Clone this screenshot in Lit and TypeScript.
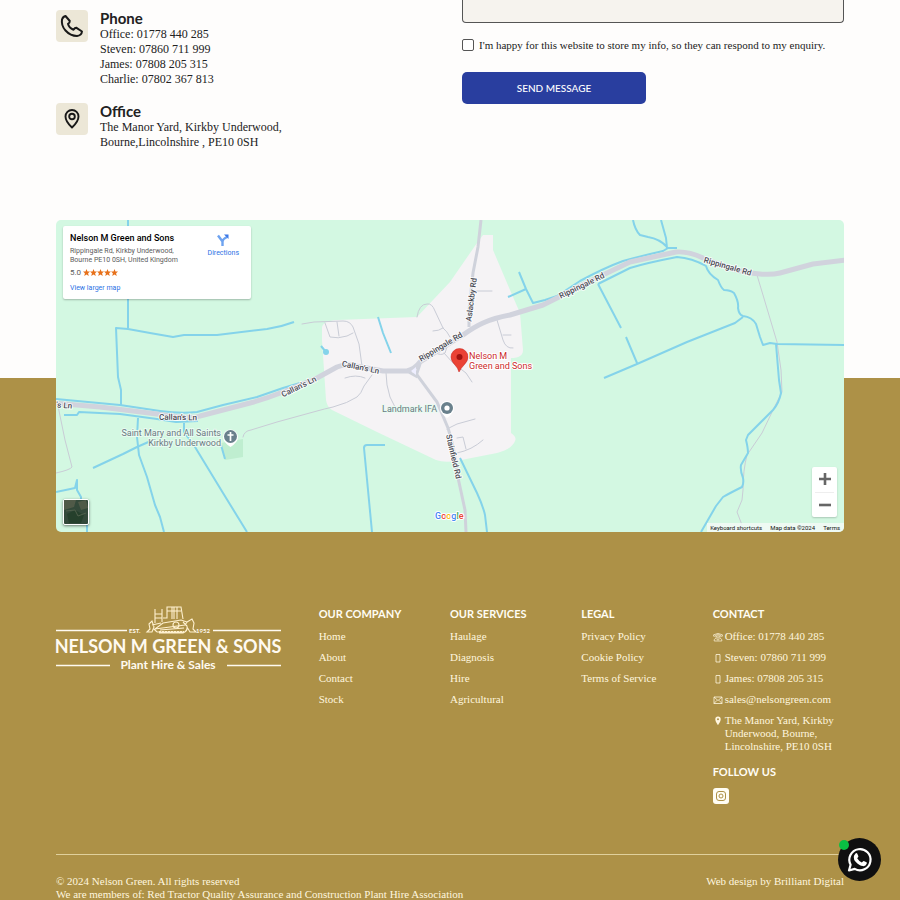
import { LitElement, html, css, svg } from "lit";
import { customElement } from "lit/decorators.js";

const water = [
  "M72 0V108",
  "M65 185V170L62 157L60 108L72 109L94 113L117 117L128 115L161 115L211 109Q225 107 238 102",
  "M0 179L64 185L104 191Q125 194 141 192Q152 189 167 185L201 177L227 168L244 163",
  "M8 195H21L23 192L64 194L101 199L120 202L142 201",
  "M82 198L81 217L83 235L91 257L99 285L104 297L108 312",
  "M37 248L67 234L81 227L97 220",
  "M128 203V212L139 227L167 273L191 312 M165 225L169 239",
  "M0 272L19 268L21 260V270L25 277V285 M31 303V312",
  "M322 97L327 113L335 133 M265 126L270 132",
  "M316 312L312 270L308 228Q308 225 311 225H329",
  "M404 238L421 273Q427 286 429 295L431 312",
  "M463 52L470 69L477 83L489 80L501 76L524 61Q548 48 567 41Q585 36 607 31L612 28H621 M470 69L452 77",
  "M577 0Q579 10 584 15L592 17Q604 19 611 27 M605 0L610 18L611 28",
  "M542 64L574 48Q590 43 621 37Q636 38 650 46Q652 54 662 60Q665 68 668 70Q674 70 678 73Q683 82 682 88Q683 95 687 96Q696 97 700 104L704 117L707 125L714 123L721 124L788 125",
  "M542 64L565 108 M570 117L581 143 M548 158L581 144L631 122L679 103L687 97",
  "M720 124L723 160L725 173Q723 183 717 190L692 215L690 220Q692 228 692 233L685 245Q684 250 687 258Q688 263 686 267Q674 273 667 277L660 286L645 312",
];

const bigRoads = [
  "M-2 183L44 187L77 191L124 197Q138 198 144 196L194 183Q212 178 227 172L261 158L281 147Q290 143 300 146L327 151H351Q359 149 364 142L407 115Q418 107 427 103Q438 98 454 95L487 85L507 75L524 66L551 53L574 42L597 37L620 32Q632 31 647 38L674 48Q690 53 704 54Q716 55 724 53L757 44L790 40",
];

const midRoads = [
  "M425 0L422 27L417 53L413 90V107",
  "M357 149L361 155L381 182L392 208Q399 230 401 253L409 290L410 312",
  "M351 151L360 156L364 144",
];

const smallRoads = [
  "M2 186L9 220L16 247Q14 250 0 253",
  "M246 104L258 102L287 101Q294 101 297 107L303 124L306 146 M269 103L274 117Q282 119 291 116L297 113 M281 102L283 116",
  "M187 217Q188 211 195 210L221 202L261 191Q268 189 277 187Q292 183 301 177Q305 174 308 166L316 155 M289 158Q300 154 309 158",
  "M361 97Q363 84 371 84Q376 83 379 91L387 108Q391 111 394 117 M377 111Q383 111 387 108",
  "M380 133Q385 136 389 133L391 127 M388 133L397 143L410 153L416 162",
  "M419 71H436 M441 100L447 120Q450 129 457 128 M447 115H455",
  "M330 153Q330 165 334 177L339 187 M391 209L401 204L419 199 M401 218L407 217L410 229 M401 233Q416 230 427 220",
  "M701 55L721 122L725 150L726 172L717 190L706 213L691 235Q687 250 687 270L686 280L681 292L686 305",
];

@customElement("site-map")
export class SiteMap extends LitElement {
  static styles = css`
    :host { display: block; position: relative; height: 312px; overflow: hidden; border-radius: 5px; background: #d3f8e2; font-family: Roboto, sans-serif; }
    .canvas { display: block; width: 100%; height: 100%; font-family: Roboto, sans-serif; }
    .card { position: absolute; left: 7px; top: 6px; width: 188px; height: 73px; box-sizing: border-box; padding: 7px; background: #fff; border-radius: 2px; box-shadow: 0 1px 2px rgba(0,0,0,.25); display: flex; justify-content: space-between; color: #5b5b5b; font-size: 7px; line-height: 9px; }
    .name { margin: 0 0 4px; font-size: 9px; line-height: 10px; font-weight: 500; color: #000; white-space: nowrap; }
    .addr { margin: 0; white-space: nowrap; }
    .rate { margin: 3px 0 7px; font-size: 8px; display: flex; align-items: center; gap: 2px; }
    .stars { width: 35px; height: 7px; }
    a { color: #2a72e5; text-decoration: none; }
    .dir { display: flex; flex-direction: column; align-items: center; gap: 3px; padding: 1px 5px 0 0; height: 30px; }
    .dir svg { flex: none; }
    .zoom { position: absolute; right: 7px; bottom: 15px; width: 25px; height: 50px; border-radius: 2px; background: #fff; box-shadow: 0 1px 2px rgba(0,0,0,.2); display: flex; flex-direction: column; align-items: center; }
    .zoom button { flex: 1; width: 25px; padding: 0; border: 0; background: none; display: grid; place-items: center; }
    .zoom button + button { width: 19px; border-top: 1px solid #eee; }
    .sat { position: absolute; left: 7px; bottom: 7px; width: 26px; height: 26px; padding: 0; border: 1px solid #fff; border-radius: 2px; box-shadow: 0 1px 3px rgba(0,0,0,.5); overflow: hidden; }
    .sat svg { display: block; }
    .legal { position: absolute; right: 0; bottom: 0; height: 9px; display: flex; gap: 8px; padding: 0 4px 0 3px; background: rgba(245,250,247,.8); font-size: 6px; line-height: 9px; color: #111; white-space: nowrap; }
    .legal a { color: #111; }
  `;

  render() {
    return html`
      <svg class="canvas" viewBox="0 0 788 312" preserveAspectRatio="xMidYMid slice" role="img" aria-label="Map of Kirkby Underwood">
        <path fill="#f5f3f5" d="M427 15H437V30L454 70L464 93L467 130Q467 138 455 138V213Q461 217 459 221Q456 229 441 233L400 241Q388 243 380 240L321 212L276 190Q271 187 270 180L266 120V108Q266 101 281 100L361 97L394 62L421 23Z" />
        <path fill="#bfeed0" d="M165 223L187 219V237L169 240Z" />
        <g fill="none" stroke="#c9ccd6" stroke-width="1" stroke-linecap="round">${smallRoads.map((d) => svg`<path d=${d} />`)}</g>
        <g fill="none" stroke="#84d3ea" stroke-width="2" stroke-linejoin="round">${water.map((d) => svg`<path d=${d} />`)}</g>
        <circle cx="270" cy="132" r="3" fill="#84d3ea" />
        <g fill="none" stroke="#cfd2db" stroke-width="3">${midRoads.map((d) => svg`<path d=${d} />`)}</g>
        <g fill="none" stroke="#d1d3dd" stroke-width="5" stroke-linejoin="round">${bigRoads.map((d) => svg`<path d=${d} />`)}</g>
        <path d="M355 151L360 147V155Z" fill="#eef" />
        <g font-size="8" font-weight="500" fill="#4a4b55" stroke="#fff" stroke-opacity="0.800" stroke-width="2" stroke-linejoin="round" paint-order="stroke" text-anchor="middle">
          <text transform="translate(8 188) rotate(5)">'s Ln</text>
          <text transform="translate(122 200) rotate(1)">Callan's Ln</text>
          <text transform="translate(244 169) rotate(-26)">Callan's Ln</text>
          <text transform="translate(304 150) rotate(12)">Callan's Ln</text>
          <text transform="translate(386 129) rotate(-31)">Rippingale Rd</text>
          <text transform="translate(418 80) rotate(-83)">Aslackby Rd</text>
          <text transform="translate(527 68) rotate(-26)">Rippingale Rd</text>
          <text transform="translate(671 49) rotate(16)">Rippingale Rd</text>
          <text transform="translate(395 237) rotate(77)">Stainfield Rd</text>
        </g>
        <g font-size="9" fill="#6b7a83" stroke="#e9fbf1" stroke-width="2" paint-order="stroke" text-anchor="end">
          <text x="165" y="216">Saint Mary and All Saints</text>
          <text x="165" y="226">Kirkby Underwood</text>
          <text x="381" y="192">Landmark IFA</text>
        </g>
        <path d="M167 217a7.500 7.500 0 1 1 15 0q0 5-7.500 10q-7.500-5-7.500-10Z" fill="#fff" />
        <circle cx="174.500" cy="216.500" r="6.500" fill="#69808c" />
        <path d="M174.500 212v9M171.500 215h6" stroke="#fff" stroke-width="1.700" />
        <path d="M384 188a7 7 0 1 1 14 0q0 5-7 10q-7-5-7-10Z" fill="#fff" />
        <circle cx="391" cy="188" r="6" fill="#69808c" /><circle cx="391" cy="188" r="2.600" fill="#fff" />
        <path d="M403 152q-1-4-4-7q-4-4-4-8a8 8 0 1 1 17 0q0 4-4 8q-3 3-5 7Z" fill="#ea4335" stroke="#c5221f" stroke-width="0.500" />
        <circle cx="403.500" cy="137" r="3" fill="#a11410" />
        <g font-size="9" fill="#cc2a2a" stroke="#fff" stroke-width="2" paint-order="stroke">
          <text x="413" y="139">Nelson M</text>
          <text x="413" y="149">Green and Sons</text>
        </g>
        <text x="379" y="299" font-size="9" font-weight="500" stroke="#fff" stroke-width="2" paint-order="stroke"><tspan fill="#4285f4">G</tspan><tspan fill="#ea4335">o</tspan><tspan fill="#fbbc05">o</tspan><tspan fill="#4285f4">g</tspan><tspan fill="#34a853">l</tspan><tspan fill="#ea4335">e</tspan></text>
      </svg>
      <div class="card">
        <div>
          <p class="name">Nelson M Green and Sons</p>
          <p class="addr">Rippingale Rd, Kirkby Underwood,<br />Bourne PE10 0SH, United Kingdom</p>
          <p class="rate">5.0
            <svg class="stars" viewBox="0 0 35 7" fill="#e7711b">${[0, 7, 14, 21, 28].map((x) => svg`<path transform="translate(${x} 0)" d="M3.500 0l1 2.400 2.500.2-1.900 1.700.6 2.600-2.200-1.400-2.200 1.400.6-2.600L0 2.600l2.500-.2z" />`)}</svg>
          </p>
          <a href="#map">View larger map</a>
        </div>
        <a class="dir" href="#directions">
          <svg width="12" height="12" viewBox="0 0 12 12"><path d="M5.500 12V7.500L1 1.500M5.500 8Q5.500 5 10 3" fill="none" stroke="#6ea3f0" stroke-width="2.400" /><path d="M7 0.500h4.500V5z" fill="#3b78e7" /></svg>
          Directions
        </a>
      </div>
      <button class="sat" aria-label="Show satellite imagery">
        <svg width="24" height="24" viewBox="0 0 24 24"><path fill="#33493a" d="M0 0h24v24H0z" /><path fill="#505a48" d="M0 0h12l-2 7-10 3zM14 2l8-2 2 8-7 2z" /><path fill="#25402c" d="M3 14l8-4 9 5-3 8H5z" /><path stroke="#4f5f4b" stroke-width="1" d="M2 11l9-1 3 6 8-3" fill="none" /></svg>
      </button>
      <div class="zoom">
        <button aria-label="Zoom in"><svg width="12" height="12"><path d="M6 0v12M0 6h12" stroke="#666" stroke-width="2.600" /></svg></button>
        <button aria-label="Zoom out"><svg width="12" height="12"><path d="M0 6h12" stroke="#666" stroke-width="2.600" /></svg></button>
      </div>
      <div class="legal"><span>Keyboard shortcuts</span><span>Map data ©2024</span><a href="#terms">Terms</a></div>
    `;
  }
}

const columns = [
  { title: "OUR COMPANY", links: ["Home", "About", "Contact", "Stock"] },
  { title: "OUR SERVICES", links: ["Haulage", "Diagnosis", "Hire", "Agricultural"] },
  { title: "LEGAL", links: ["Privacy Policy", "Cookie Policy", "Terms of Service"] },
];

const phoneIcon = svg`<g fill="none" stroke="currentColor" stroke-width="0.700"><path d="M.6 4.200V2.800Q5 0 9.400 2.800v1.400H7.200V3Q5 2.300 2.800 3v1.200zM1.200 9V7.600Q3.600 6 3.800 4h2.400q.2 2 2.600 3.600V9z" /><circle cx="5" cy="6.800" r="1.200" /></g>`;
const mobileIcon = svg`<path d="M3 1.500h4v7.500H3z" fill="none" stroke="currentColor" stroke-width="0.800" />`;
const mailIcon = svg`<path d="M1 2h8v6.500H1zl4 3.500 4-3.500M1 8.500l3-3.200M9 8.500L6 5.300" fill="none" stroke="currentColor" stroke-width="0.800" />`;
const pinIcon = svg`<path fill="currentColor" fill-rule="evenodd" d="M5 .5a2.700 2.700 0 0 1 2.700 2.700C7.700 5.600 5 9 5 9S2.300 5.600 2.300 3.200A2.700 2.700 0 0 1 5 .5zm0 1.700a1 1 0 1 0 0 2 1 1 0 0 0 0-2z" />`;

const contacts = [
  { icon: phoneIcon, text: "Office: 01778 440 285", href: "tel:01778440285" },
  { icon: mobileIcon, text: "Steven: 07860 711 999", href: "tel:07860711999" },
  { icon: mobileIcon, text: "James: 07808 205 315", href: "tel:07808205315" },
  { icon: mailIcon, text: "sales@nelsongreen.com", href: "mailto:sales@nelsongreen.com" },
  { icon: pinIcon, text: "The Manor Yard, Kirkby Underwood, Bourne, Lincolnshire, PE10 0SH", href: "#map" },
];

@customElement("app-root")
export class AppRoot extends LitElement {
  static styles = css`
    :host { display: block; min-height: 100vh; background: #fefdfc; color: #222; font-family: "Liberation Serif", serif; overflow: hidden; }
    a { color: inherit; text-decoration: none; }
    .contact { display: grid; grid-template-columns: 1fr 1fr; gap: 24px; padding: 0 56px 70px; }
    .info { padding-top: 10px; }
    .entry { display: flex; gap: 12px; }
    .entry + .entry { margin-top: 16px; }
    .tile { flex: none; width: 32px; height: 32px; display: grid; place-items: center; background: #ece7d7; border-radius: 4px; }
    .entry h2 { margin: 0 0 1px; font: 700 15px/16px Lato, sans-serif; }
    .entry p { margin: 0; font-size: 12px; line-height: 15px; }
    form { display: flex; flex-direction: column; align-items: flex-start; }
    textarea { display: block; width: 100%; height: 23px; box-sizing: border-box; resize: none; background: #f6f3ee; border: 1px solid #555; border-top: 0; border-radius: 0 0 4px 4px; }
    .agree { display: flex; align-items: center; gap: 5px; margin: 15px 0 20px; font-size: 11px; line-height: 14px; white-space: nowrap; }
    .agree input { appearance: none; width: 12px; height: 12px; margin: 0; border: 1px solid #555; border-radius: 2px; background: #fff; }
    .send { width: 184px; height: 32px; padding: 0; border: 0; border-radius: 5px; background: #293e9f; color: #fff; font: 500 10px Lato, sans-serif; }
    .band { padding: 0 56px; background: linear-gradient(#fefdfc 158px, #ad9147 158px); }
    footer { background: #ad9147; color: #fff6df; padding: 75px 56px 0; }
    .cols { display: grid; grid-template-columns: 2fr 1fr 1fr 1fr 1fr; min-height: 247px; }
    .logo { width: 225px; height: 68px; display: block; font-family: Lato, sans-serif; overflow: visible; }
    h3 { margin: 0 0 10px; font: 700 11px/13px Lato, sans-serif; color: #fffdf4; }
    ul { list-style: none; margin: 0; padding: 0; font-size: 11px; line-height: 13px; display: flex; flex-direction: column; gap: 8px; }
    .reach a { display: flex; gap: 2px; }
    .reach svg { flex: none; width: 10px; height: 10px; margin-top: 2px; }
    .follow { margin-top: 12px; }
    .insta { display: block; width: 16px; height: 16px; }
    .base { display: flex; justify-content: space-between; border-top: 1px solid #e0d09c; padding-top: 20px; font-size: 11px; line-height: 13px; }
    .base p { margin: 0; }
    .chat { position: fixed; right: 19px; bottom: 19px; width: 43px; height: 43px; display: block; }
    .chat svg { display: block; overflow: visible; }
  `;

  render() {
    return html`
      <main>
        <section class="contact">
          <div class="info">
            <div class="entry">
              <span class="tile"><svg width="32" height="32" viewBox="0 0 32 32" fill="none" stroke="#181818" stroke-width="2" stroke-linejoin="round"><path d="M9.500 6L13.800 11Q14 12.500 12 13.800Q13 18 17.500 19.800Q19 17.500 20.500 17.800L26 21.500Q25.500 25.500 21 26Q14.500 26 9.500 20.500Q5 15.500 6 9.500Q7 6.500 9.500 6Z" /></svg></span>
              <div><h2>Phone</h2><p>Office: 01778 440 285<br />Steven: 07860 711 999<br />James: 07808 205 315<br />Charlie: 07802 367 813</p></div>
            </div>
            <div class="entry">
              <span class="tile"><svg width="16" height="20" viewBox="0 0 16 20" fill="none" stroke="#181818" stroke-width="1.900" stroke-linejoin="round"><path d="M8 18.500Q1.500 12.500 1.500 7.500a6.500 6.500 0 0 1 13 0Q14.500 12.500 8 18.500Z" /><circle cx="8" cy="7.500" r="2.800" /></svg></span>
              <div><h2>Office</h2><p>The Manor Yard, Kirkby Underwood,<br />Bourne,Lincolnshire , PE10 0SH</p></div>
            </div>
          </div>
          <form>
            <textarea aria-label="Message"></textarea>
            <label class="agree"><input type="checkbox" />I'm happy for this website to store my info, so they can respond to my enquiry.</label>
            <button class="send" type="button">SEND MESSAGE</button>
          </form>
        </section>
        <div class="band"><site-map></site-map></div>
      </main>
      <footer>
        <div class="cols">
          <svg class="logo" viewBox="0 2 225 68" fill="#fffaf0" role="img" aria-label="Nelson M Green and Sons">
            <path d="M0 25.500H71M157 25.500H225M0 60.500H54M171 60.500H225" stroke="#fffaf0" stroke-width="1.300" />
            <g fill="none" stroke="#fff1cf" stroke-width="1.100"><path d="M91 27L94 24L93 19L96 16L98 22L96 27ZM96 20L105 18M99 18V4M99 9H106V4M106 9V17M99 13H106M107 13H111V2H116V14M111 2H125L127 14M118 2V14M121 2V14M111 6H125M107 18L125 15L131 17L129 20L99 24ZM101 27L98 24M103 28H127Q132 26 131 21L127 17M131 17L136 14L138 18L137 24L140 27H134L131 22M104 25L128 23M101 27H128" /><circle cx="120" cy="20" r="3" /><path d="M103 27H128" stroke-dasharray="2 1" stroke-width="2" /></g>
            <text x="73" y="28" font-size="6" font-weight="700">EST.</text>
            <text x="140" y="28" font-size="6" font-weight="700">1952</text>
            <text x="112" y="48" text-anchor="middle" font-size="18" font-weight="700">NELSON M GREEN &amp; SONS</text>
            <text x="112" y="64" text-anchor="middle" font-size="12" font-weight="700">Plant Hire &amp; Sales</text>
          </svg>
          ${columns.map((c) => html`<nav><h3>${c.title}</h3><ul>${c.links.map((l) => html`<li><a href="#">${l}</a></li>`)}</ul></nav>`)}
          <div>
            <h3>CONTACT</h3>
            <ul class="reach">${contacts.map((c) => html`<li><a href=${c.href}><svg viewBox="0 0 10 10">${c.icon}</svg><span>${c.text}</span></a></li>`)}</ul>
            <h3 class="follow">FOLLOW US</h3>
            <a class="insta" href="#instagram" aria-label="Instagram"><svg width="16" height="16" viewBox="0 0 16 16"><rect width="16" height="16" rx="3" fill="#fffdf4" /><g fill="none" stroke="#ad9147"><rect x="3.500" y="3.500" width="9" height="9" rx="2.500" /><circle cx="8" cy="8" r="2" /></g></svg></a>
          </div>
        </div>
        <div class="base">
          <p>© 2024 Nelson Green. All rights reserved<br />We are members of: Red Tractor Quality Assurance and Construction Plant Hire Association</p>
          <p>Web design by <a href="#agency">Brilliant Digital</a></p>
        </div>
      </footer>
      <a class="chat" href="#chat" aria-label="Chat on WhatsApp">
        <svg width="43" height="43" viewBox="0 0 43 43"><circle cx="21.500" cy="21.500" r="21.500" fill="#0f0f10" /><path d="M11 32.500L12.600 26.700A10.600 10.600 0 1 1 16.700 30.900Z" fill="none" stroke="#fff" stroke-width="2.200" stroke-linejoin="round" /><path d="M17.500 15.500q1-.8 1.700 0l1.200 2.800q.2.600-1.200 2 1.700 3 4.600 4.300 1.400-1.800 2-1.600l2.700 1.300q.6.400.2 1.500-1 2.600-3.800 2.300-3.800-.3-7.300-4.300-3.800-4.500-.1-8.300z" fill="#fff" /><circle cx="6" cy="7" r="5" fill="#0abf43" /></svg>
      </a>
    `;
  }
}
